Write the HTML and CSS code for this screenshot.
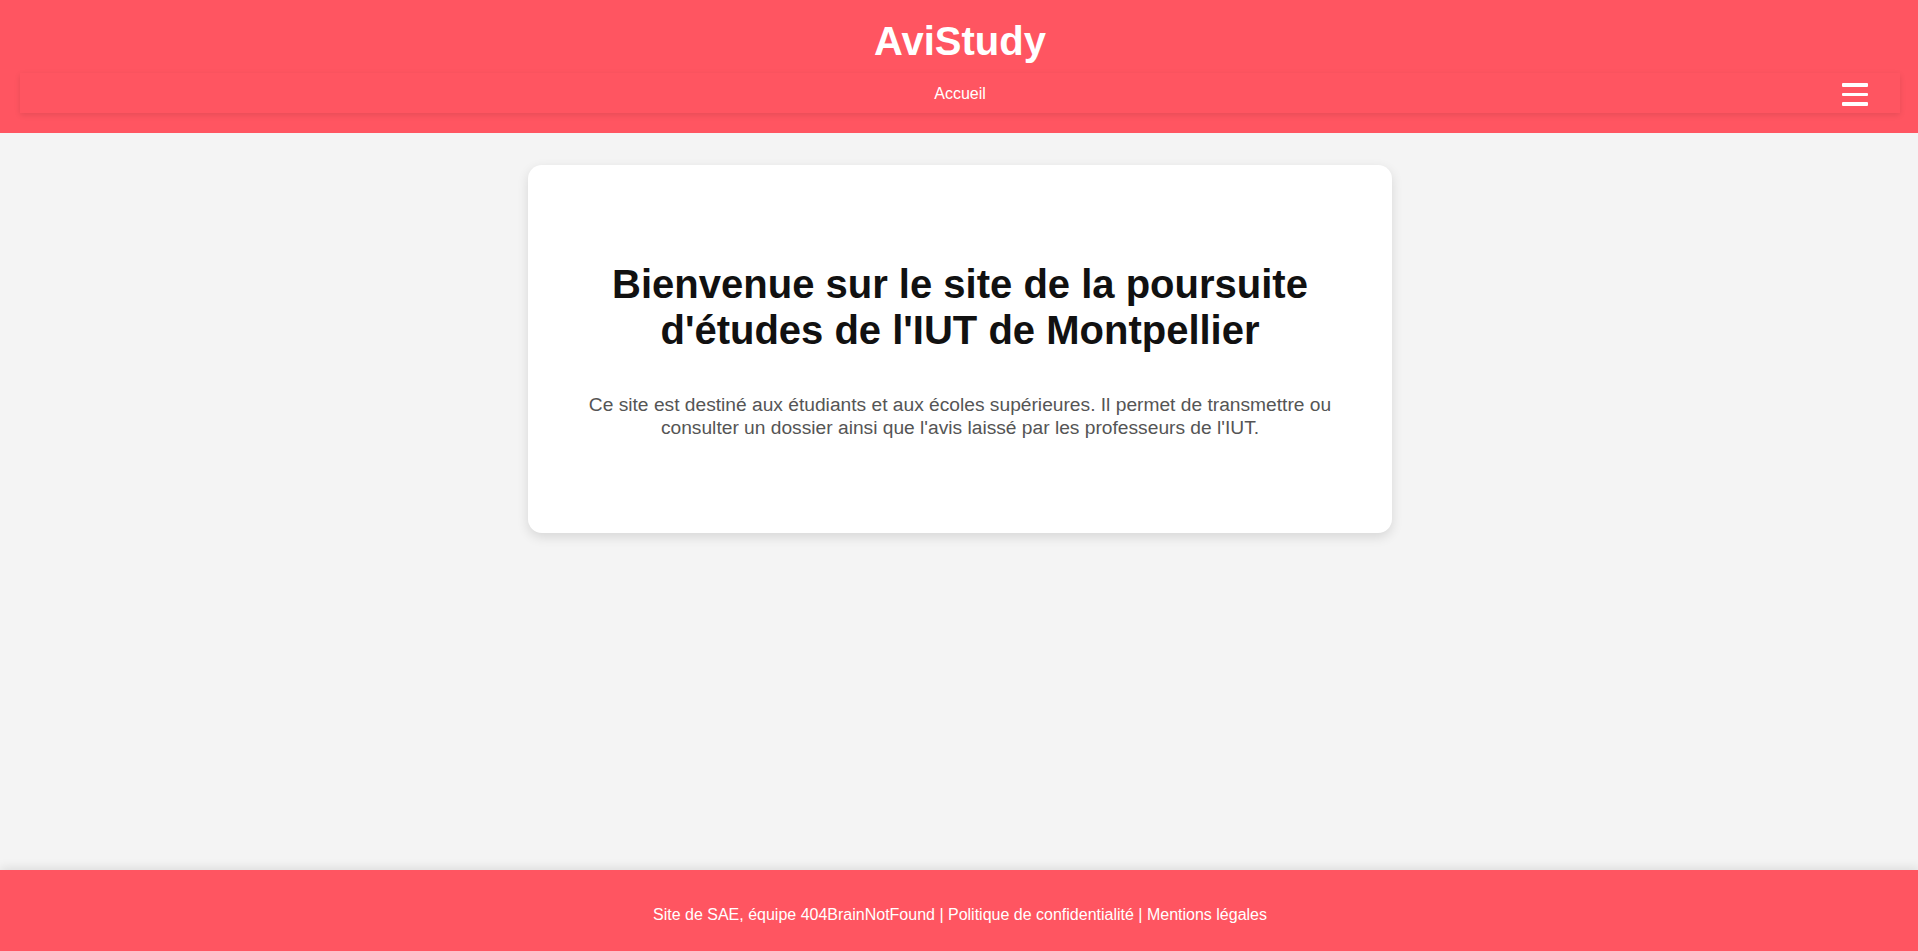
FILE: index.html
```html
<!DOCTYPE html>
<html lang="fr">
<head>
<meta charset="utf-8">
<title>AviStudy</title>
<link rel="stylesheet" href="styles.css">
</head>
<body>
<header class="site-header">
  <h1 class="brand">AviStudy</h1>
  <nav class="navbar">
    <span class="nav-spacer"></span>
    <ul class="nav-links">
      <li><a href="#" class="nav-link">Accueil</a></li>
    </ul>
    <button class="burger" aria-label="Menu">
      <span class="burger-line"></span>
      <span class="burger-line"></span>
      <span class="burger-line"></span>
    </button>
  </nav>
</header>
<main class="content">
  <section class="card">
    <h2 class="card-title">Bienvenue sur le site de la poursuite d'études de l'IUT de Montpellier</h2>
    <p class="card-text">Ce site est destiné aux étudiants et aux écoles supérieures. Il permet de transmettre ou consulter un dossier ainsi que l'avis laissé par les professeurs de l'IUT.</p>
  </section>
</main>
<footer class="site-footer">
  <p class="footer-text">Site de SAE, équipe 404BrainNotFound | Politique de confidentialité | Mentions légales</p>
</footer>
</body>
</html>
```
FILE: styles.css
```css
* { box-sizing: border-box; }
html { margin: 0; padding: 0; overflow-x: hidden; }
body {
  margin: 0;
  padding: 0;
  width: 1920px;
  font-family: "Liberation Sans", Arial, sans-serif;
  background: #f4f4f4;
  min-height: 100vh;
  display: flex;
  flex-direction: column;
}
.site-header {
  background: #ff5561;
  padding: 18px 20px 20px;
  color: #fff;
}
.brand {
  margin: 0 0 9px;
  font-size: 40px;
  line-height: 46px;
  font-weight: 700;
  text-align: center;
}
.navbar {
  height: 40px;
  display: grid;
  grid-template-columns: 1fr auto 1fr;
  align-items: center;
  background: #ff5561;
  box-shadow: 0 2px 6px rgba(0,0,0,0.1);
  padding: 0 32px;
}
.nav-links {
  list-style: none;
  margin: 2px 0 0;
  padding: 0;
  display: flex;
}
.nav-link {
  color: #fff;
  text-decoration: none;
  font-size: 16px;
  line-height: 18px;
}
.burger {
  justify-self: end;
  background: none;
  border: 0;
  padding: 0;
  margin-top: 3px;
  display: flex;
  flex-direction: column;
  gap: 6px;
  cursor: pointer;
}
.burger-line {
  display: block;
  width: 26px;
  height: 3.5px;
  background: #fff;
  border-radius: 1px;
}
.content {
  flex: 1;
  padding: 32px 0;
  display: flex;
  flex-direction: column;
  align-items: center;
}
.card {
  width: 864px;
  background: #fff;
  border-radius: 14px;
  box-shadow: 0 4px 12px rgba(0,0,0,0.12);
  padding: 96px 32px 93px;
  text-align: center;
}
.card-title {
  margin: 0 0 40px;
  font-size: 40px;
  line-height: 46px;
  font-weight: 700;
  color: #111;
}
.card-text {
  margin: 0;
  font-size: 19.2px;
  line-height: 23.3px;
  color: #555;
}
.site-footer {
  background: #ff5561;
  color: #fff;
  padding: 36px 20px 27px;
  box-shadow: 0 -2px 10px rgba(0,0,0,0.1);
  text-align: center;
}
.footer-text {
  margin: 0;
  font-size: 16px;
  line-height: 18.4px;
}
```
